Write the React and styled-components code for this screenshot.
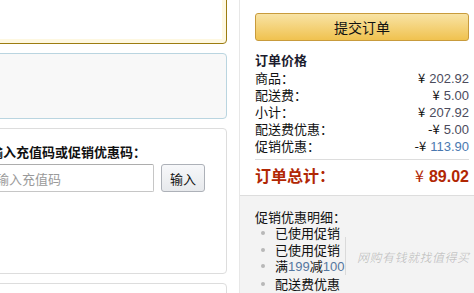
import React from 'react';
import styled, { createGlobalStyle } from 'styled-components';

const GlobalStyle = createGlobalStyle`
  html, body {
    margin: 0;
    padding: 0;
    background: #fff;
  }
  body {
    font-family: "Noto Sans CJK SC", "Liberation Sans", sans-serif;
    font-size: 13px;
    color: #111;
  }
`;

const Page = styled.div`
  display: flex;
  height: 293px;
  width: 474px;
  overflow: hidden;
  position: relative;
`;

const LeftCol = styled.div`
  flex: none;
  width: 257px;
  margin-left: -30px;
  margin-top: -40px;
  display: flex;
  flex-direction: column;
  gap: 9px;
`;

const Box = styled.div`
  box-sizing: border-box;
  flex: none;
  height: ${p => p.h}px;
  border: 1px solid ${p => p.border || '#ddd'};
  border-radius: 4px;
  background: ${p => p.bg || '#fff'};
  box-shadow: ${p => p.glow ? 'inset 0 0 0 4px #fef8e1' : 'none'};
  padding: 15px 19px;
`;

const BoxTitle = styled.div`
  font-weight: bold;
  font-size: 13px;
  line-height: 16px;
  color: #111;
  white-space: nowrap;
`;

const InputRow = styled.div`
  display: flex;
  gap: 7px;
  margin-top: 4px;
`;

const CodeInput = styled.input`
  box-sizing: border-box;
  width: 164px;
  height: 28px;
  border: 1px solid #c6c6c6;
  border-top-color: #adadad;
  border-radius: 2px;
  padding: 0 5px;
  font-family: "Noto Sans CJK SC", sans-serif;
  font-size: 13px;
  &::placeholder {
    color: #9a9a9a;
  }
`;

const SmallButton = styled.button`
  box-sizing: border-box;
  width: 44px;
  height: 28px;
  border: 1px solid #adb1b8;
  border-radius: 3px;
  background: linear-gradient(#f7f8fa, #e7e9ec);
  font-family: "Noto Sans CJK SC", sans-serif;
  font-size: 13px;
  color: #111;
  padding: 0;
`;

const RightCol = styled.div`
  flex: none;
  width: 235px;
  margin-left: 12px;
  border-left: 1px solid #e7e7e7;
  display: flex;
  flex-direction: column;
`;

const Summary = styled.div`
  padding: 13px 6px 0 15px;
  height: 195px;
  flex: none;
  box-sizing: border-box;
`;

const SubmitButton = styled.button`
  box-sizing: border-box;
  display: block;
  width: 100%;
  height: 28px;
  border: 1px solid #c89b3c;
  border-radius: 3px;
  background: linear-gradient(#f8e3a5, #f0c24f);
  font-family: "Noto Sans CJK SC", sans-serif;
  font-size: 14px;
  color: #111;
  padding: 0;
`;

const PriceTitle = styled.div`
  margin: 11px 0 2px;
  font-weight: bold;
  font-size: 13px;
  line-height: 16px;
  color: #1c1c2e;
`;

const Row = styled.div`
  display: flex;
  justify-content: space-between;
  line-height: 16px;
  font-size: 13px;
`;

const Amount = styled.span`
  font-family: "Liberation Sans", Arial, sans-serif;
  color: ${p => p.color || '#4b4b5c'};
  font-size: 13px;
`;

const Yen = styled.span`
  color: #111;
  margin-right: 4px;
  font-family: "Noto Sans CJK SC", sans-serif;
`;

const Divider = styled.div`
  height: 1px;
  background: #ddd;
  margin: 4px 0 5px;
`;

const TotalRow = styled.div`
  display: flex;
  justify-content: space-between;
  line-height: 20px;
  font-size: 16px;
  font-weight: bold;
  color: #b12704;
`;

const TotalValue = styled.span`
  font-family: "Liberation Sans", Arial, sans-serif;
  & > span {
    font-family: "Noto Sans CJK SC", sans-serif;
    font-weight: normal;
    margin-right: 5px;
  }
`;

const Details = styled.div`
  flex: 1;
  background: #f3f3f3;
  border-top: 1px solid #ddd;
  padding: 13px 6px 0 15px;
  position: relative;
`;

const DetailTitle = styled.div`
  line-height: 16px;
  font-size: 13px;
`;

const List = styled.ul`
  margin: 0;
  padding: 0;
  list-style: none;
`;

const Item = styled.li`
  line-height: 16.5px;
  white-space: nowrap;
  &::before {
    content: '';
    display: inline-block;
    vertical-align: middle;
    width: 4px;
    height: 4px;
    border-radius: 50%;
    background: #b8b8b8;
    margin: 0 10px 2px 6px;
  }
`;

const Num = styled.span`
  font-family: "Liberation Sans", Arial, sans-serif;
  color: #5577a0;
`;

const Watermark = styled.div`
  position: absolute;
  left: 105px;
  top: 41px;
  display: flex;
  align-items: center;
  gap: 11px;
  pointer-events: none;
  white-space: nowrap;
`;

const MarkLine = styled.span`
  width: 1px;
  height: 38px;
  background: rgba(0, 0, 0, 0.1);
`;

const MarkText = styled.span`
  font-size: 12px;
  color: rgba(0, 0, 0, 0.2);
  letter-spacing: 0.5px;
  font-style: italic;
`;

const rows = [
  { label: '商品：', sign: '', value: '202.92' },
  { label: '配送费：', sign: '', value: '5.00' },
  { label: '小计：', sign: '', value: '207.92' },
  { label: '配送费优惠：', sign: '-', value: '5.00' },
  { label: '促销优惠：', sign: '-', value: '113.90', color: '#4a79b0' },
];

export default function App() {
  return (
    <Page>
      <GlobalStyle />
      <LeftCol>
        <Box h={84} border="#9c7c10" glow />
        <Box h={66} border="#bad5e0" bg="#f8f8f8" />
        <Box h={146}>
          <BoxTitle>输入充值码或促销优惠码：</BoxTitle>
          <InputRow>
            <CodeInput placeholder="输入充值码" />
            <SmallButton>输入</SmallButton>
          </InputRow>
        </Box>
        <Box h={60} />
      </LeftCol>
      <RightCol>
        <Summary>
          <SubmitButton>提交订单</SubmitButton>
          <PriceTitle>订单价格</PriceTitle>
          {rows.map(r => (
            <Row key={r.label}>
              <span>{r.label}</span>
              <Amount color={r.color}>
                <Yen>{r.sign}¥</Yen>
                {r.value}
              </Amount>
            </Row>
          ))}
          <Divider />
          <TotalRow>
            <span>订单总计：</span>
            <TotalValue><span>¥</span>89.02</TotalValue>
          </TotalRow>
        </Summary>
        <Details>
          <DetailTitle>促销优惠明细：</DetailTitle>
          <List>
            <Item>已使用促销</Item>
            <Item>已使用促销</Item>
            <Item>满<Num>199</Num>减<Num>100</Num></Item>
            <Item>配送费优惠</Item>
          </List>
          <Watermark>
            <MarkLine />
            <MarkText>网购有钱就找值得买</MarkText>
          </Watermark>
        </Details>
      </RightCol>
    </Page>
  );
}
